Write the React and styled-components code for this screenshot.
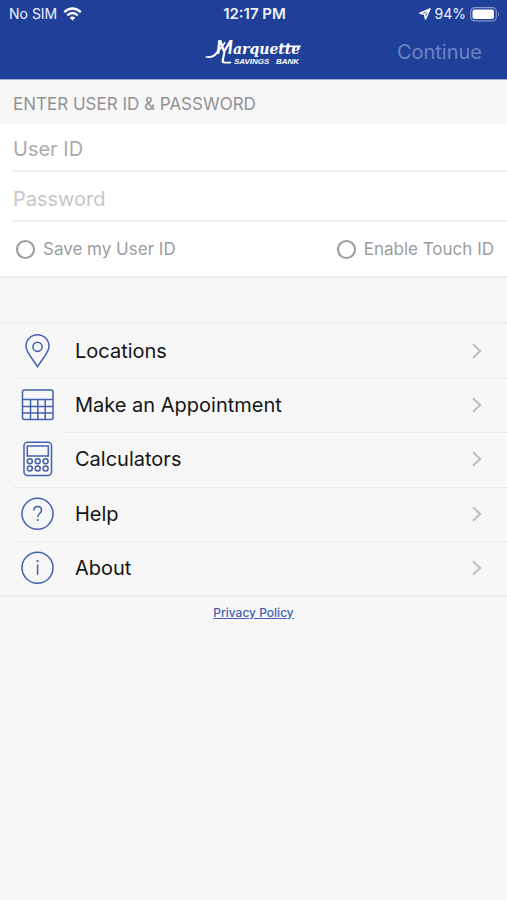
import React from "react";
import styled, { createGlobalStyle } from "styled-components";

const blue = "#203f98";
const line = "#ebebec";

const GlobalStyle = createGlobalStyle`
  *, *::before, *::after { box-sizing: border-box; }
  body {
    margin: 0;
    background: #f7f7f8;
    color: #151515;
    font-family: Inter, "Liberation Sans", sans-serif;
  }
`;

const Screen = styled.div`
  display: flex;
  flex-direction: column;
  min-height: 100vh;
`;

const Header = styled.header`
  background: ${blue};
  border-bottom: 1px solid #a5b2d6;
  color: #eef2fc;
`;

const StatusBar = styled.div`
  display: grid;
  grid-template-columns: 1fr auto 1fr;
  align-items: center;
  height: 28px;
  padding: 0 7px 0 9px;
  font-size: 14px;
  line-height: 20px;
`;

const StatusGroup = styled.div`
  display: flex;
  align-items: center;
  justify-content: ${(p) => (p.$end ? "flex-end" : "flex-start")};
  gap: ${(p) => (p.$end ? "4px" : "6px")};
`;

const Clock = styled.time`
  font-size: 15px;
  font-weight: 600;
`;

const NavBar = styled.div`
  display: grid;
  grid-template-columns: 1fr auto 1fr;
  align-items: center;
  height: 51px;
  padding: 0 25px 3px;
`;

const LogoSlot = styled.div`
  grid-column: 2;
  display: flex;
`;

const ContinueButton = styled.button`
  justify-self: end;
  padding: 0;
  border: 0;
  background: none;
  color: #6a84c4;
  font: inherit;
  font-size: 20px;
  line-height: 28px;
`;

const SectionTitle = styled.h1`
  margin: 0;
  padding: 12px 13px 8px;
  color: #929294;
  font-size: 17px;
  font-weight: 400;
  line-height: 24px;
`;

const Form = styled.form`
  background: #fff;
  border-bottom: 2px solid #efeff0;
`;

const Field = styled.div`
  margin-left: 13px;
  border-bottom: 2px solid #efeff0;
  & + & { padding-top: 2px; }
`;

const TextInput = styled.input`
  display: block;
  width: 100%;
  height: 46px;
  padding: 4px 0 0;
  border: 0;
  outline: 0;
  background: transparent;
  color: #222;
  font: inherit;
  font-size: 20px;
  &::placeholder {
    color: ${(p) => (p.$faint ? "#c6c6c8" : "#aaaaac")};
    opacity: 1;
  }
`;

const Options = styled.div`
  display: flex;
  justify-content: space-between;
  align-items: center;
  height: 54px;
  padding: 0 13px 0 16px;
`;

const Option = styled.label`
  display: flex;
  align-items: center;
  gap: 8px;
  color: #9c9c9e;
  font-size: 17px;
  line-height: 24px;
`;

const RoundCheck = styled.input`
  appearance: none;
  width: 19px;
  height: 19px;
  margin: 0;
  border: 2px solid #9b9b9d;
  border-radius: 50%;
  &:checked { background: ${blue}; }
`;

const Menu = styled.nav`
  display: grid;
  grid-auto-rows: 1fr;
  min-height: 275px;
  margin-top: 44px;
  border-top: 2px solid #efeff0;
  border-bottom: 2px solid ${line};
`;

const MenuLink = styled.a`
  display: grid;
  grid-template-columns: 34px 1fr auto;
  align-items: center;
  column-gap: 20px;
  padding: 0 25px 0 21px;
  background: linear-gradient(${line}, ${line}) right top / calc(100% - ${(p) => p.$inset}px) ${(p) => (p.$first ? "0" : "1px")} no-repeat;
  color: #151515;
  font-size: 20px;
  line-height: 28px;
  text-decoration: none;
`;

const IconSvg = styled.svg`
  display: block;
  fill: none;
  stroke: #4560ae;
  stroke-width: 1.5;
`;

const Footer = styled.footer`
  display: flex;
  justify-content: center;
  padding: 8px 0;
`;

const PolicyLink = styled.a`
  color: #4560ae;
  font-size: 12px;
  font-weight: 500;
  line-height: 16px;
  text-underline-offset: 1px;
`;

const WifiIcon = () => (
  <svg width="19" height="14" viewBox="0 0 19 14" fill="none" stroke="#fff" strokeWidth="2.4" aria-hidden="true">
    <path d="M1.2 5.2Q9.5-2 17.8 5.2" />
    <path d="M4.3 8.4Q9.5 3.8 14.7 8.4" />
    <path d="M6.8 10.8Q9.5 8.4 12.2 10.8L9.5 13.6Z" fill="#fff" stroke="none" />
  </svg>
);

const LocationArrow = () => (
  <svg width="12" height="12" viewBox="0 0 12 12" fill="none" stroke="#fff" strokeWidth="1.5" strokeLinejoin="round" aria-hidden="true">
    <path d="M11 1L1 5.2l4.6 1L6.5 11z" />
    <path d="M11 1L5.6 6.2" />
  </svg>
);

const Battery = () => (
  <svg width="30" height="15" viewBox="0 0 30 15" aria-hidden="true">
    <rect x=".7" y=".7" width="25.6" height="13.2" rx="4" fill="none" stroke="#8798cb" strokeWidth="1.2" />
    <rect x="2.5" y="2.5" width="21.5" height="9.6" rx="2" fill="#fff" />
    <path d="M28 5q2 2.3 0 4.6z" fill="#8798cb" />
  </svg>
);

const LogoSvg = styled.svg`
  display: block;
  overflow: visible;
  fill: #fff;
  font-style: italic;
  font-weight: 700;
`;

const LogoInitial = styled.text`
  font-family: Lato, sans-serif;
  font-size: 19px;
  font-weight: 900;
`;

const LogoName = styled.text`
  font-family: "DejaVu Serif", serif;
  font-size: 14px;
`;

const LogoCaption = styled.text`
  font-family: "Liberation Sans", sans-serif;
  font-size: 8px;
`;

const Logo = () => (
  <LogoSvg width="97" height="32" viewBox="0 -3 97 32" role="img" aria-label="Marquette Savings Bank">
    <path d="M.5 17.2C6 18 9 16 12 12L20 2.5 20.5 4 13.5 13.6C9.5 19 6 19.6.5 18.6Z" />
    <path d="M20.5 13L19 20.5C18.7 22.3 19.5 22.8 21 22.8L26.5 22.8 25.8 24.4 19.5 24.4C16.8 24.4 16.2 23 16.7 20.5L18.5 13Z" />
    <LogoInitial x="11" y="15">M</LogoInitial>
    <LogoName x="28" y="15">arquette</LogoName>
    <path d="M75 6.6H96L95.4 8.2H74.5Z" />
    <LogoCaption x="29" y="25">SAVINGS</LogoCaption>
    <LogoCaption x="71" y="25">BANK</LogoCaption>
  </LogoSvg>
);

const PinIcon = () => (
  <IconSvg width="34" height="36" viewBox="0 0 34 36" aria-hidden="true">
    <path d="M16.5 33.7C12 26 5 19.5 5 13.2a11.5 11.5 0 0 1 23 0C28 19.5 21 26 16.5 33.7Z" />
    <circle cx="16.5" cy="13.8" r="4.6" />
  </IconSvg>
);

const CalendarIcon = () => (
  <IconSvg width="34" height="34" viewBox="0 0 34 34" aria-hidden="true">
    <rect x="1.5" y="2" width="30.5" height="29.5" rx="2" />
    <path d="M1.5 11.5H32M1.5 18.5H32M1.5 25H32M9.5 11.5v20M16.8 11.5v20M24.2 11.5v20" />
  </IconSvg>
);

const CalculatorIcon = () => (
  <IconSvg width="34" height="36" viewBox="0 0 34 36" aria-hidden="true">
    <rect x="3" y="1.2" width="27.5" height="33.3" rx="3.5" />
    <rect x="6.3" y="5" width="21" height="10" />
    {[20.3, 27.6].map((y) => [8.8, 16.7, 24.6].map((x) => <circle key={`${x}-${y}`} cx={x} cy={y} r="2.5" />))}
  </IconSvg>
);

const HelpIcon = () => (
  <IconSvg width="34" height="34" viewBox="0 0 34 34" aria-hidden="true">
    <circle cx="16.5" cy="16.7" r="15.5" />
    <path d="M12.9 13.4c0-2.4 1.6-3.8 3.8-3.8s3.8 1.4 3.8 3.6c0 3.3-3.8 3.3-3.8 7" />
    <circle cx="16.7" cy="23" r="1" fill="#4560ae" stroke="none" />
  </IconSvg>
);

const AboutIcon = () => (
  <IconSvg width="34" height="34" viewBox="0 0 34 34" aria-hidden="true">
    <circle cx="16.5" cy="16.7" r="15.5" />
    <path d="M16.6 13.5v10.2" />
    <circle cx="16.6" cy="10.2" r="1.1" fill="#4560ae" stroke="none" />
  </IconSvg>
);

const Chevron = () => (
  <svg width="10" height="16" viewBox="0 0 10 16" fill="none" stroke="#bebec0" strokeWidth="2" aria-hidden="true">
    <path d="M1 1.2L8.2 8 1 14.8" />
  </svg>
);

const items = [
  { label: "Locations", Icon: PinIcon, inset: 0 },
  { label: "Make an Appointment", Icon: CalendarIcon, inset: 15 },
  { label: "Calculators", Icon: CalculatorIcon, inset: 65 },
  { label: "Help", Icon: HelpIcon, inset: 13 },
  { label: "About", Icon: AboutIcon, inset: 15 },
];

export default function App() {
  return (
    <Screen>
      <GlobalStyle />
      <Header>
        <StatusBar>
          <StatusGroup><span>No SIM</span><WifiIcon /></StatusGroup>
          <Clock>12:17 PM</Clock>
          <StatusGroup $end><LocationArrow /><span>94%</span><Battery /></StatusGroup>
        </StatusBar>
        <NavBar>
          <LogoSlot><Logo /></LogoSlot>
          <ContinueButton type="submit" form="login">Continue</ContinueButton>
        </NavBar>
      </Header>
      <main>
        <SectionTitle>ENTER USER ID &amp; PASSWORD</SectionTitle>
        <Form id="login" onSubmit={(e) => e.preventDefault()}>
          <Field><TextInput type="text" placeholder="User ID" aria-label="User ID" /></Field>
          <Field><TextInput type="password" placeholder="Password" aria-label="Password" $faint /></Field>
          <Options>
            <Option><RoundCheck type="checkbox" />Save my User ID</Option>
            <Option><RoundCheck type="checkbox" />Enable Touch ID</Option>
          </Options>
        </Form>
        <Menu>
          {items.map(({ label, Icon, inset }, i) => (
            <MenuLink key={label} href="#" $inset={inset} $first={i === 0}>
              <Icon />
              <span>{label}</span>
              <Chevron />
            </MenuLink>
          ))}
        </Menu>
      </main>
      <Footer><PolicyLink href="#">Privacy Policy</PolicyLink></Footer>
    </Screen>
  );
}
